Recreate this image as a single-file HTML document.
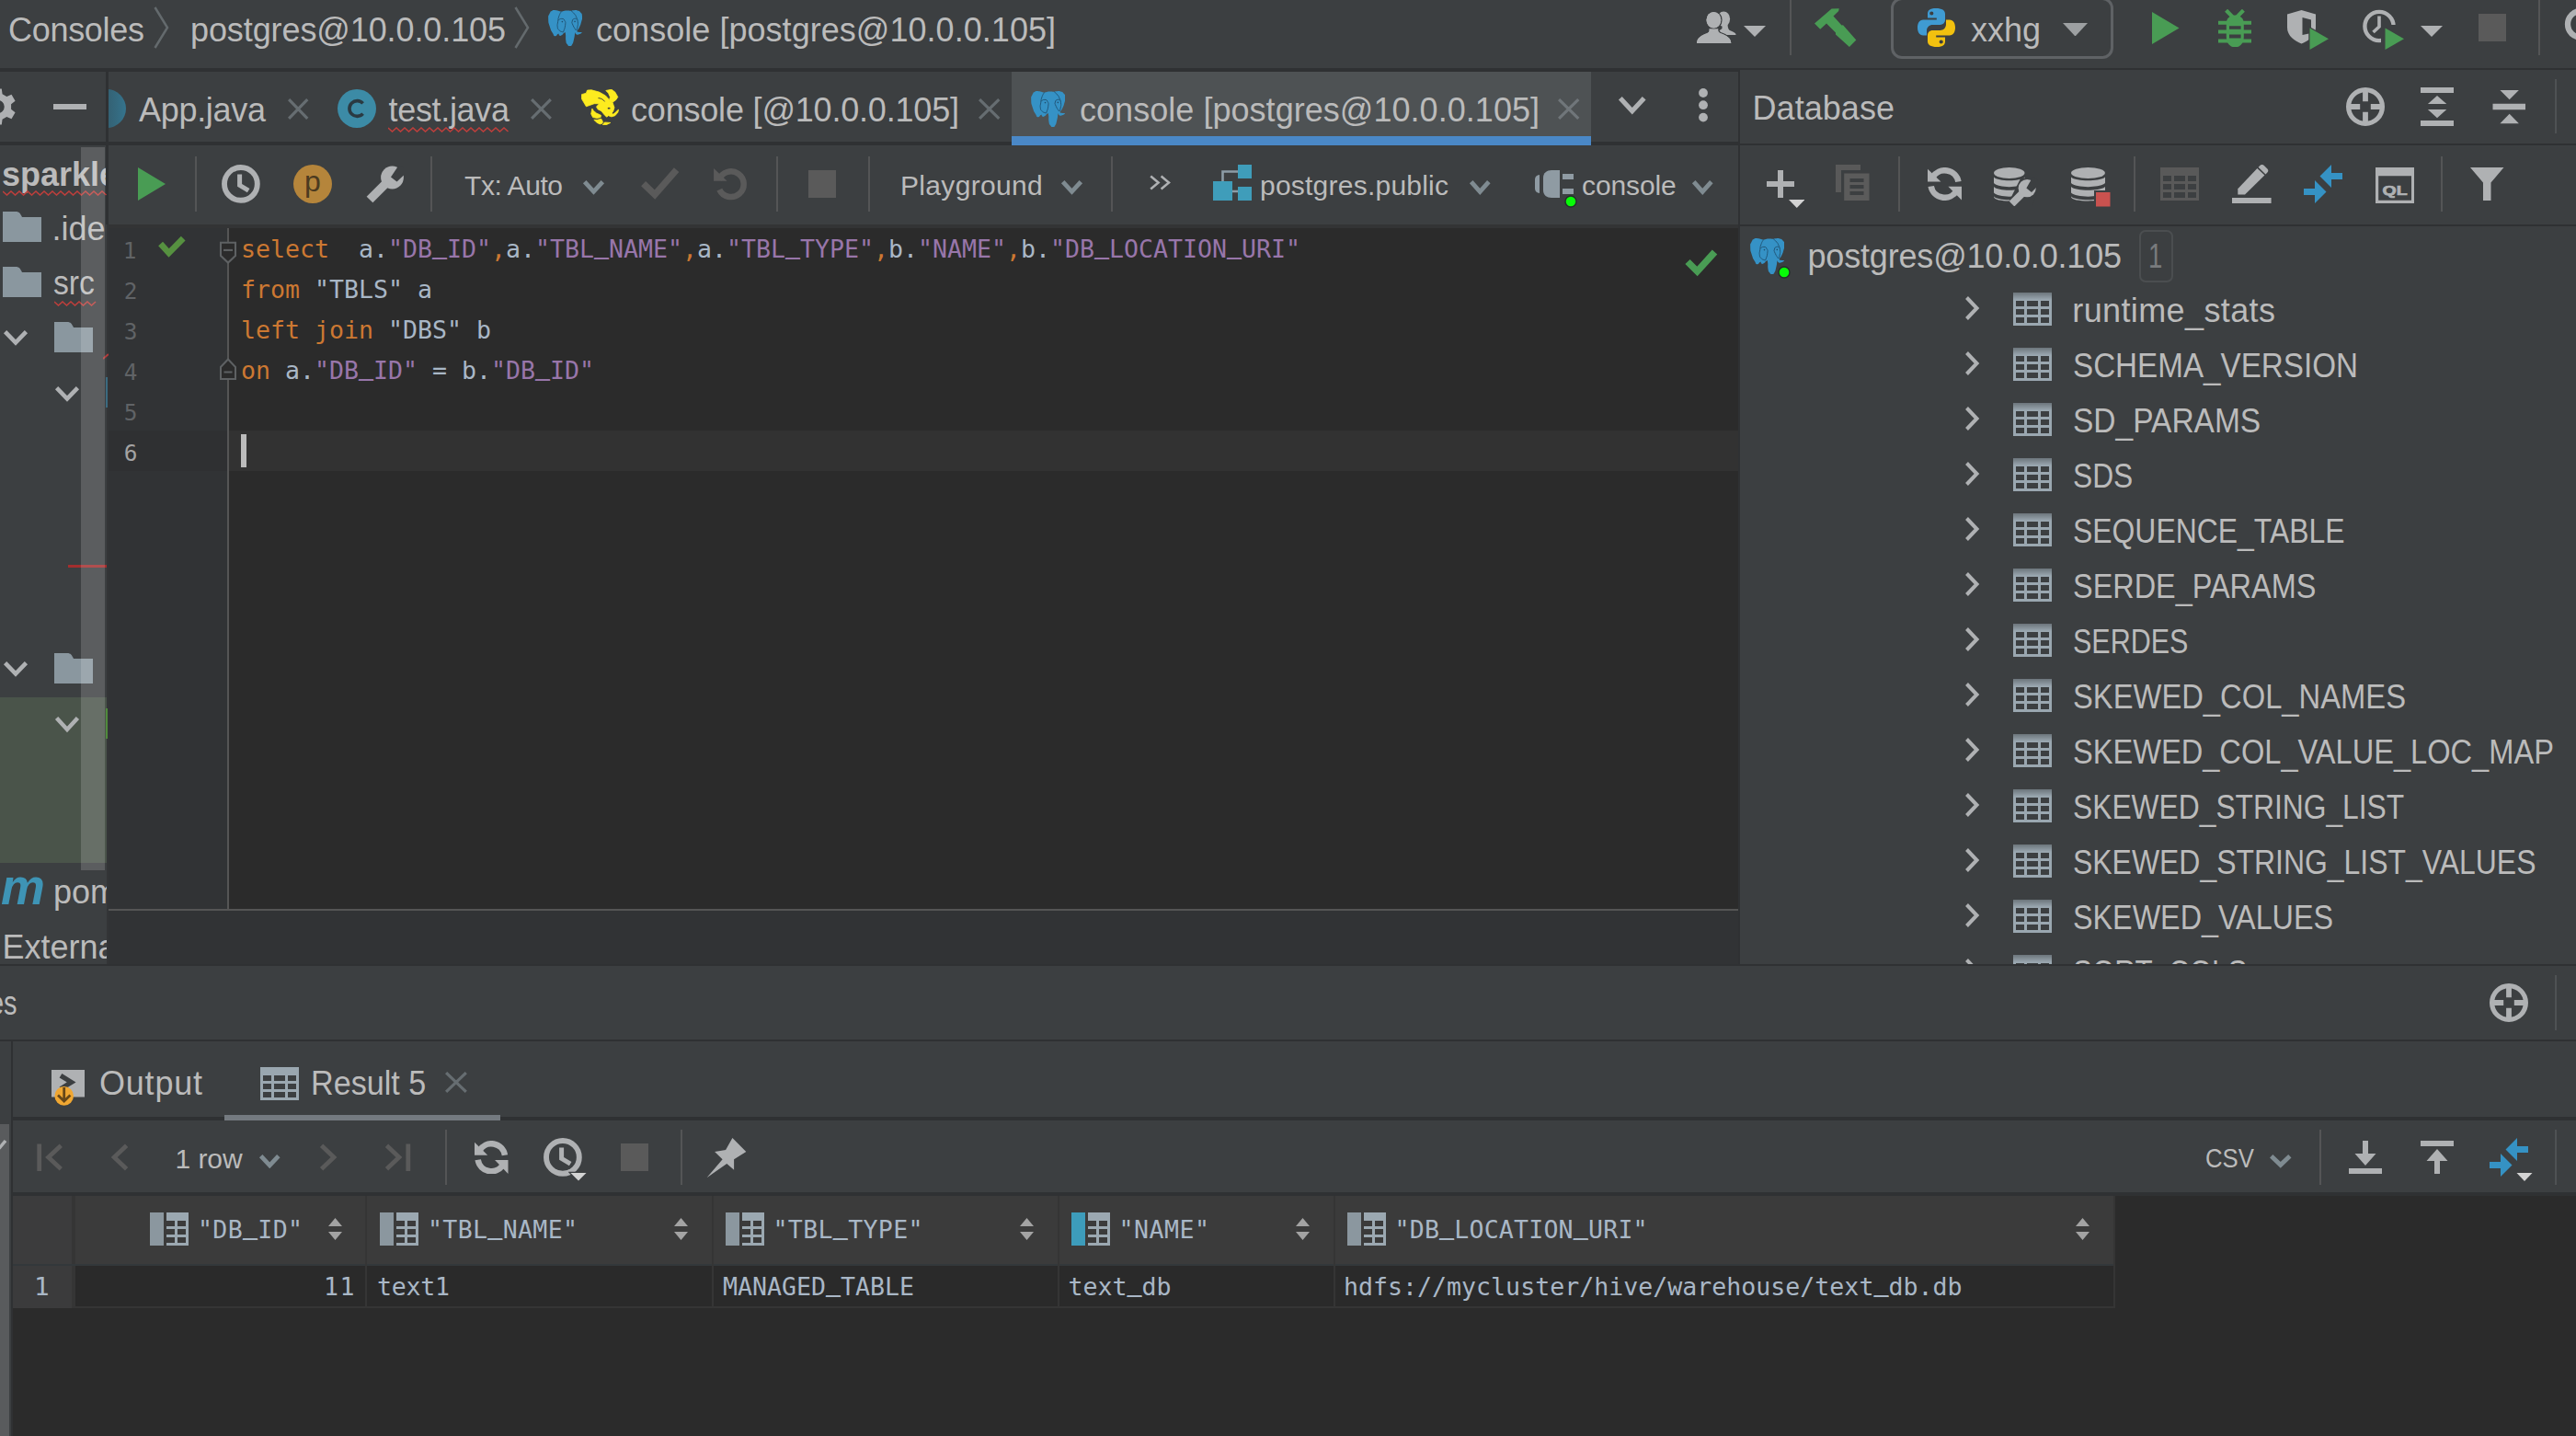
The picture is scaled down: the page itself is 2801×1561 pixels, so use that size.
<!DOCTYPE html>
<html lang="en"><head><meta charset="utf-8"><title>console [postgres@10.0.0.105]</title>
<style>

html,body{margin:0;padding:0}
body{width:2801px;height:1561px;overflow:hidden;position:relative;background:#3c3f41;font-family:"Liberation Sans",sans-serif;}
div,span,svg,section,header,nav,aside,main{position:absolute;box-sizing:border-box}
.sec{left:0;top:0;width:0;height:0}
.t{white-space:pre;font-family:"Liberation Sans",sans-serif}
.m{font-family:"DejaVu Sans Mono","Liberation Mono",monospace}
.v{position:relative;top:2px}
.u{position:relative;top:-4px;text-shadow:0 -1px 0 currentColor,0 -0.5px 0 currentColor}

</style></head>
<body>
<svg width="0" height="0" style="left:0;top:0" aria-hidden="true"><defs><linearGradient id="tblgrad" x1="0" y1="0" x2="0" y2="1"><stop offset="0" stop-color="#000" stop-opacity="0.3"/><stop offset="1" stop-color="#000" stop-opacity="0"/></linearGradient></defs></svg>
<!-- navigation bar -->
<nav class="sec" id="navigation-bar">
<div style="left:0px;top:0px;width:2801px;height:74px;background:#3c3f41;"></div>
<div style="left:0px;top:74px;width:2801px;height:2px;background:#2f3133;"></div>
<div style="left:0px;top:76px;width:1890px;height:2px;background:#2f3133;"></div>
<span class="t" style="left:9.00px;top:9.03px;font-size:36px;line-height:47px;color:#bbb;letter-spacing:-0.297px;">Consoles</span>
<span class="t" style="left:207.00px;top:9.03px;font-size:36px;line-height:47px;color:#bbb;letter-spacing:-0.098px;">postgres@10.0.0.105</span>
<span class="t" style="left:648.00px;top:9.03px;font-size:36px;line-height:47px;color:#bbb;letter-spacing:0.041px;">console [postgres@10.0.0.105]</span>
<span class="t" style="left:2143.00px;top:9.03px;font-size:36px;line-height:47px;color:#bbb;letter-spacing:-0.007px;">xxhg</span>
<svg style="left:167px;top:6px;" width="17" height="48" viewBox="0 0 17 48"><path d="M1.5 2 L15 24 L1.5 46" fill="none" stroke="#646a6d" stroke-width="2.5"/></svg>
<svg style="left:559px;top:6px;" width="17" height="48" viewBox="0 0 17 48"><path d="M1.5 2 L15 24 L1.5 46" fill="none" stroke="#646a6d" stroke-width="2.5"/></svg>
<svg style="left:596px;top:10.5px;" width="37" height="39.0" viewBox="0 0 37.3 39" preserveAspectRatio="none"><path fill="#3592c6" d="M4.60 0.40 C2.30 1.67 2.97 0.87 1.50 4.00 C0.03 7.13 0.07 5.07 0.20 9.80 C0.33 14.53 0.30 13.10 1.90 18.20 C3.50 23.30 3.07 21.73 5.00 25.10 C6.93 28.47 5.67 28.07 7.70 28.30 C9.73 28.53 9.57 26.03 11.10 25.80 C12.63 25.57 11.03 27.13 12.30 27.60 C13.57 28.07 13.00 28.23 14.90 27.20 C16.80 26.17 16.60 24.83 18.00 24.50 C19.40 24.17 18.60 23.20 19.10 26.20 C19.60 29.20 18.83 29.80 19.50 33.50 C20.17 37.20 19.70 35.47 21.10 37.30 C22.50 39.13 21.93 39.00 23.70 39.00 C25.47 39.00 24.87 39.77 26.40 37.30 C27.93 34.83 27.20 35.97 28.30 31.60 C29.40 27.23 29.00 26.07 29.70 24.20 C30.40 22.33 29.20 25.27 30.40 26.00 C31.60 26.73 31.13 26.90 33.30 26.40 C35.47 25.90 36.63 25.33 36.90 24.50 C37.17 23.67 35.80 24.47 34.10 23.90 C32.40 23.33 31.80 24.43 31.80 22.80 C31.80 21.17 32.57 22.33 34.10 19.00 C35.63 15.67 35.33 16.90 36.40 12.80 C37.47 8.70 37.57 10.13 37.30 6.70 C37.03 3.27 37.30 4.60 35.60 2.50 C33.90 0.40 34.87 1.13 32.20 0.40 C29.53 -0.33 29.90 0.17 27.60 0.30 C25.30 0.43 27.23 0.73 25.30 0.80 C23.37 0.87 24.23 0.53 21.80 0.50 C19.37 0.47 20.43 0.37 18.00 0.70 C15.57 1.03 16.53 1.43 14.50 1.50 C12.47 1.57 13.93 1.33 11.90 0.90 C9.87 0.47 10.83 0.37 8.40 0.20 C5.97 0.03 6.90 -0.87 4.60 0.40 Z"/><path fill="none" stroke="#1f4f6f" stroke-width="0.9" d="M14.50 1.50 C13.63 3.23 13.17 2.93 11.90 6.70 C10.63 10.47 11.23 8.97 10.70 12.80 C10.17 16.63 9.90 15.27 10.30 18.20 C10.70 21.13 10.37 19.83 11.90 21.60 C13.43 23.37 13.13 22.83 14.90 23.50 C16.67 24.17 16.43 23.57 17.20 23.60"/><path fill="none" stroke="#1f4f6f" stroke-width="0.9" d="M25.30 0.80 C26.43 1.87 26.80 1.67 28.70 4.00 C30.60 6.33 29.73 4.87 31.00 7.80 C32.27 10.73 32.10 9.33 32.50 12.80 C32.90 16.27 32.70 15.13 32.20 18.20 C31.70 21.27 31.40 20.73 31.00 22.00"/><path fill="none" stroke="#1f4f6f" stroke-width="0.9" d="M11.30 10.80 C12.50 10.33 12.67 9.23 14.90 9.40 C17.13 9.57 16.70 9.00 18.00 11.30 C19.30 13.60 19.20 12.27 18.80 16.30 C18.40 20.33 17.47 21.03 16.80 23.40"/><path fill="none" stroke="#1f4f6f" stroke-width="0.9" d="M31.60 10.10 C30.63 9.87 30.43 8.73 28.70 9.40 C26.97 10.07 26.90 9.80 26.40 12.10 C25.90 14.40 25.80 13.00 27.20 16.30 C28.60 19.60 29.47 20.10 30.60 22.00"/><circle cx="15.5" cy="12.6" r="0.8" fill="#1f4f6f"/><circle cx="29.3" cy="12.4" r="0.8" fill="#1f4f6f"/></svg>
<svg style="left:1845px;top:11.5px;" width="43" height="35.5" viewBox="0 0 43 35.5"><ellipse cx="29.2" cy="8.6" rx="6.9" ry="8.2" fill="#afb1b3"/><path fill="#afb1b3" d="M22 26 C22 22 26 20.5 27.5 19 L27.5 15 L33.6 15 C33.6 18.5 34.6 20.6 37 21.6 C40.2 22.8 42.6 24 42.6 26 Z"/><g stroke="#3c3f41" stroke-width="2.6" paint-order="stroke"><path fill="#afb1b3" d="M0 35.4 C0 29 5 26.4 11 24.2 C13.6 23.2 14 21.6 13.5 19.4 L23.3 19.4 C22.8 21.6 23.3 23.2 25.8 24.2 C32 26.4 37.3 29 37.3 35.4 Z"/><ellipse cx="18.4" cy="9.7" rx="7.9" ry="8.8" fill="#afb1b3"/></g><path fill="#afb1b3" d="M0 35.4 C0 29 5 26.4 11 24.2 C13.6 23.2 14 21.6 13.5 19.4 L23.3 19.4 C22.8 21.6 23.3 23.2 25.8 24.2 C32 26.4 37.3 29 37.3 35.4 Z"/><ellipse cx="18.4" cy="9.7" rx="7.9" ry="8.8" fill="#afb1b3"/></svg>
<svg style="left:1896px;top:28px;" width="24" height="12" viewBox="0 0 24 12"><path d="M0 0 H24 L12.0 12 Z" fill="#afb1b3"/></svg>
<svg style="left:1972.5px;top:9px;" width="46.0" height="43" viewBox="0 0 46.0 43"><path fill="#499c54" d="M0 16.5 L18.6 0.4 L26.7 0.2 L26.2 3 L20.5 8.5 L29.5 18.5 L31 18.2 L45.3 34.5 L37.9 42 L23 28.5 L23 26.5 L13 16.5 L6.2 22.8 Z"/></svg>
<div style="left:2056px;top:-3px;width:242px;height:67px;background:transparent;border:3.5px solid #5f6265;border-radius:12px"></div>
<svg style="left:2085px;top:9px;" width="41" height="42" viewBox="0 0 41 42"><path fill="#3f9bd2" fill-rule="evenodd" d="M20 0 C13 0 11 2.6 11 6 V10.5 H20.8 V12.6 H6.2 C2 12.6 0 16.4 0 21 C0 25.6 2 29.4 6.2 29.4 H10 V24.4 C10 20.6 13 18 16.4 18 H24.6 C27.6 18 30 15.8 30 12.6 V6 C30 2.2 26.6 0 20 0 Z M15.3 3.4 A2.1 2.1 0 1 1 15.3 7.6 A2.1 2.1 0 1 1 15.3 3.4 Z"/><g transform="rotate(180 20.5 21)"><path fill="#f2c10f" fill-rule="evenodd" d="M20 0 C13 0 11 2.6 11 6 V10.5 H20.8 V12.6 H6.2 C2 12.6 0 16.4 0 21 C0 25.6 2 29.4 6.2 29.4 H10 V24.4 C10 20.6 13 18 16.4 18 H24.6 C27.6 18 30 15.8 30 12.6 V6 C30 2.2 26.6 0 20 0 Z M15.3 3.4 A2.1 2.1 0 1 1 15.3 7.6 A2.1 2.1 0 1 1 15.3 3.4 Z"/></g></svg>
<svg style="left:2242.5px;top:24.5px;" width="27.0" height="14.5" viewBox="0 0 27.0 14.5"><path d="M0 0 H27.0 L13.5 14.5 Z" fill="#9da0a2"/></svg>
<svg style="left:2340px;top:12.5px;" width="29.5" height="35.0" viewBox="0 0 29.5 35.0"><path fill="#499c54" d="M0 0 L29.5 17.5 L0 35 Z"/></svg>
<svg style="left:2412px;top:9.5px;" width="36" height="41.5" viewBox="0 0 36 41.5"><path d="M8.6 1.2 L15.6 8.4 M27.4 1.2 L20.4 8.4" stroke="#499c54" stroke-width="4.2" fill="none"/><path fill="#499c54" d="M18.3 6.4 C24 6.4 27.8 10 27.8 15 V30 C27.8 37 23.6 41.4 18.3 41.4 C13 41.4 8.8 37 8.8 30 V15 C8.8 10 12.6 6.4 18.3 6.4 Z"/><path fill="#499c54" d="M0 12.8 H36 V16.8 H0Z M0 22.4 H36 V26.4 H0Z M0 32.4 H36 V36.4 H0Z"/><path fill="#3c3f41" d="M12 18.2 H24.6 V21.8 H12Z M12 27.6 H24.6 V31.4 H12Z"/></svg>
<svg style="left:2487px;top:11px;" width="45" height="43" viewBox="0 0 45 43"><path fill="#afb1b3" d="M0 4.5 L15.5 0 L31 4.5 V19 C31 28 23 33.5 15.5 36.5 C8 33.5 0 28 0 19 Z"/><path fill="#3c3f41" d="M16.5 8 L26 10.5 V25 L16.5 27 Z"/><path fill="#499c54" stroke="#3c3f41" stroke-width="2.5" paint-order="stroke" d="M24.5 19.5 L45 31.2 L24.5 43 Z"/></svg>
<svg style="left:2569px;top:10px;" width="45" height="44" viewBox="0 0 45 44"><circle cx="18" cy="18.5" r="15.6" fill="none" stroke="#afb1b3" stroke-width="4.4"/><path d="M18 7.5 V19 L11.5 25" fill="none" stroke="#afb1b3" stroke-width="3.6"/><path fill="#3c3f41" d="M20 17 H40 V40 H20Z"/><path fill="#499c54" d="M24.5 20.5 L45 32.2 L24.5 44 Z"/></svg>
<svg style="left:2632px;top:28px;" width="24" height="12" viewBox="0 0 24 12"><path d="M0 0 H24 L12.0 12 Z" fill="#afb1b3"/></svg>
<div style="left:2694.5px;top:15px;width:30.5px;height:30px;background:#5a5a5a;"></div>
<svg style="left:2780px;top:5px;" width="21" height="42" viewBox="0 0 21 42"><circle cx="26.4" cy="21.3" r="14.4" fill="none" stroke="#afb1b3" stroke-width="6.3"/></svg>
</nav>
<!-- editor tabs -->
<header class="sec" id="editor-tabs">
<div style="left:0px;top:78px;width:1890px;height:76px;background:#3c3f41;"></div>
<div style="left:1892px;top:76px;width:909px;height:80px;background:#3c3f41;"></div>
<div style="left:1100px;top:78px;width:630px;height:70px;background:#4e5254;"></div>
<div style="left:1100px;top:148px;width:630px;height:10px;background:#4a88c7;z-index:3"></div>
<div style="left:0px;top:154px;width:1890px;height:4px;background:#2f3133;"></div>
<div style="left:1890px;top:156px;width:911px;height:2px;background:#2f3133;"></div>
<div style="left:115px;top:78px;width:3px;height:166px;background:#2f3133;"></div>
<div style="left:116px;top:244px;width:2px;height:805px;background:#333537;"></div>
<div style="left:1890px;top:76px;width:2px;height:973px;background:#2f3133;"></div>
<span class="t" style="left:151.00px;top:96.03px;font-size:36px;line-height:47px;color:#bbb;letter-spacing:-0.297px;">App.java</span>
<span class="t" style="left:422.50px;top:96.03px;font-size:36px;line-height:47px;color:#bbb;letter-spacing:-0.318px;">test.java</span>
<span class="t" style="left:686.00px;top:96.03px;font-size:36px;line-height:47px;color:#bbb;letter-spacing:-0.189px;">console [@10.0.0.105]</span>
<span class="t" style="left:1174.00px;top:96.03px;font-size:36px;line-height:47px;color:#bbb;letter-spacing:0.041px;">console [postgres@10.0.0.105]</span>
<span class="t" style="left:1905.50px;top:94.03px;font-size:36px;line-height:47px;color:#bbb;letter-spacing:0.059px;">Database</span>
<svg style="left:0px;top:94px;" width="20" height="44" viewBox="0 0 20 44"><path fill="#afb1b3" fill-rule="evenodd" d="M2.55 8.21 L1.80 2.62 L-6.30 2.62 L-7.05 8.21 L-11.79 10.95 L-17.01 8.80 L-21.06 15.82 L-16.59 19.26 L-16.59 24.74 L-21.06 28.18 L-17.01 35.20 L-11.79 33.05 L-7.05 35.79 L-6.30 41.38 L1.80 41.38 L2.55 35.79 L7.29 33.05 L12.51 35.20 L16.56 28.18 L12.09 24.74 L12.09 19.26 L16.56 15.82 L12.51 8.80 L7.29 10.95 Z M4.75 22 A7 7 0 1 0 -9.25 22 A7 7 0 1 0 4.75 22 Z"/></svg>
<div style="left:58px;top:113px;width:36px;height:6px;background:#afb1b3;"></div>
<svg style="left:118px;top:96px;" width="22" height="44" viewBox="0 0 22 44"><defs><linearGradient id="fd" x1="0" x2="1"><stop offset="0" stop-color="#2f5f73" stop-opacity="0.55"/><stop offset="1" stop-color="#35748d"/></linearGradient></defs><circle cx="-2" cy="22" r="21" fill="url(#fd)"/></svg>
<svg style="left:367px;top:97px;" width="42" height="42" viewBox="0 0 42 42"><circle cx="21" cy="21" r="21" fill="#3c8ba6"/><path d="M27.6 15.4 A8.4 8.4 0 1 0 27.6 26.6" fill="none" stroke="#2a3a42" stroke-width="3.6"/></svg>
<svg style="left:313.3px;top:106.8px;" width="22.4" height="22.9" viewBox="0 0 22.4 22.9"><path d="M1.1 1.1 L21.299999999999976 21.79999999999999 M21.299999999999976 1.1 L1.1 21.79999999999999" stroke="#666d71" stroke-width="3.2" fill="none"/></svg>
<svg style="left:576.8px;top:106.8px;" width="22.9" height="22.9" viewBox="0 0 22.9 22.9"><path d="M1.1 1.1 L21.80000000000009 21.79999999999999 M21.80000000000009 1.1 L1.1 21.79999999999999" stroke="#666d71" stroke-width="3.2" fill="none"/></svg>
<svg style="left:1064.3px;top:106.8px;" width="23.4" height="22.9" viewBox="0 0 23.4 22.9"><path d="M1.1 1.1 L22.30000000000009 21.79999999999999 M22.30000000000009 1.1 L1.1 21.79999999999999" stroke="#666d71" stroke-width="3.2" fill="none"/></svg>
<svg style="left:1694.3px;top:106.8px;" width="23.4" height="22.9" viewBox="0 0 23.4 22.9"><path d="M1.1 1.1 L22.30000000000009 21.79999999999999 M22.30000000000009 1.1 L1.1 21.79999999999999" stroke="#70767a" stroke-width="3.2" fill="none"/></svg>
<svg style="left:422px;top:138px;" width="133" height="6" viewBox="0 0 133 6"><polyline points="0.0 1 4.5 5 9.0 1 13.5 5 18.0 1 22.5 5 27.0 1 31.5 5 36.0 1 40.5 5 45.0 1 49.5 5 54.0 1 58.5 5 63.0 1 67.5 5 72.0 1 76.5 5 81.0 1 85.5 5 90.0 1 94.5 5 99.0 1 103.5 5 108.0 1 112.5 5 117.0 1 121.5 5 126.0 1 130.5 5" fill="none" stroke="#bc3f3c" stroke-width="1.6"/></svg>
<svg style="left:632.3px;top:96.9px;" width="41.0" height="39.1" viewBox="0 0 41 39.1"><polygon fill="#fdeb1f" stroke="#fdeb1f" stroke-width="0.8" stroke-linejoin="round" points="0.4,5.7 5.4,4.2 6.5,1.1 11.1,0.8 19.5,3.1 26.4,6.9 29.5,10.3 30.6,13.0 34.1,14.5 36,19.9 34.8,23.7 33.3,26 34.8,26.8 38.3,23.7 40.6,22.2 39.8,25.3 36.8,28.7 32.9,29.9 29.5,28.7 27.9,30.2 26,28.7 21.8,23.7 18,21.8 16.5,19.1 19.5,15.7 14.2,15.7 5.4,18.8 0.4,10.3"/><polygon fill="#fdeb1f" stroke="#fdeb1f" stroke-width="0.8" stroke-linejoin="round" points="26.8,1.5 32.9,0.2 36.8,3.1 39.8,8.4 37.9,11.5 34.1,14.2 30.2,13 31.4,8.4 29.5,4.2"/><polygon fill="#fdeb1f" stroke="#fdeb1f" stroke-width="0.8" stroke-linejoin="round" points="11.9,21.1 10.7,26.8 12.6,30.6 17.2,31.4 21.1,30.6 21.4,28.3 16.5,26 13.4,23.4"/><polygon fill="#fdeb1f" stroke="#fdeb1f" stroke-width="0.8" stroke-linejoin="round" points="13.8,33.3 17.2,36.4 20.3,37.9 23,37.1 23.4,35.2 21.8,32.2 17.6,33.3"/><polygon fill="#fdeb1f" stroke="#fdeb1f" stroke-width="0.8" stroke-linejoin="round" points="23.4,38.7 27.2,38.7 31.8,36.4 25.3,36"/><ellipse cx="30.1" cy="20.7" rx="1.5" ry="0.9" fill="#3c3f41"/><path d="M18.5 9.6 C21.5 9.8 24 11 25.5 13.4" fill="none" stroke="#3c3f41" stroke-width="1"/><path d="M34.2 26.2 C36 25.4 37.4 24.2 38.4 22.8" fill="none" stroke="#3c3f41" stroke-width="1.1"/></svg>
<svg style="left:1121px;top:98.5px;" width="37.3" height="39.0" viewBox="0 0 37.3 39"><path fill="#3592c6" d="M4.60 0.40 C2.30 1.67 2.97 0.87 1.50 4.00 C0.03 7.13 0.07 5.07 0.20 9.80 C0.33 14.53 0.30 13.10 1.90 18.20 C3.50 23.30 3.07 21.73 5.00 25.10 C6.93 28.47 5.67 28.07 7.70 28.30 C9.73 28.53 9.57 26.03 11.10 25.80 C12.63 25.57 11.03 27.13 12.30 27.60 C13.57 28.07 13.00 28.23 14.90 27.20 C16.80 26.17 16.60 24.83 18.00 24.50 C19.40 24.17 18.60 23.20 19.10 26.20 C19.60 29.20 18.83 29.80 19.50 33.50 C20.17 37.20 19.70 35.47 21.10 37.30 C22.50 39.13 21.93 39.00 23.70 39.00 C25.47 39.00 24.87 39.77 26.40 37.30 C27.93 34.83 27.20 35.97 28.30 31.60 C29.40 27.23 29.00 26.07 29.70 24.20 C30.40 22.33 29.20 25.27 30.40 26.00 C31.60 26.73 31.13 26.90 33.30 26.40 C35.47 25.90 36.63 25.33 36.90 24.50 C37.17 23.67 35.80 24.47 34.10 23.90 C32.40 23.33 31.80 24.43 31.80 22.80 C31.80 21.17 32.57 22.33 34.10 19.00 C35.63 15.67 35.33 16.90 36.40 12.80 C37.47 8.70 37.57 10.13 37.30 6.70 C37.03 3.27 37.30 4.60 35.60 2.50 C33.90 0.40 34.87 1.13 32.20 0.40 C29.53 -0.33 29.90 0.17 27.60 0.30 C25.30 0.43 27.23 0.73 25.30 0.80 C23.37 0.87 24.23 0.53 21.80 0.50 C19.37 0.47 20.43 0.37 18.00 0.70 C15.57 1.03 16.53 1.43 14.50 1.50 C12.47 1.57 13.93 1.33 11.90 0.90 C9.87 0.47 10.83 0.37 8.40 0.20 C5.97 0.03 6.90 -0.87 4.60 0.40 Z"/><path fill="none" stroke="#1f4f6f" stroke-width="0.9" d="M14.50 1.50 C13.63 3.23 13.17 2.93 11.90 6.70 C10.63 10.47 11.23 8.97 10.70 12.80 C10.17 16.63 9.90 15.27 10.30 18.20 C10.70 21.13 10.37 19.83 11.90 21.60 C13.43 23.37 13.13 22.83 14.90 23.50 C16.67 24.17 16.43 23.57 17.20 23.60"/><path fill="none" stroke="#1f4f6f" stroke-width="0.9" d="M25.30 0.80 C26.43 1.87 26.80 1.67 28.70 4.00 C30.60 6.33 29.73 4.87 31.00 7.80 C32.27 10.73 32.10 9.33 32.50 12.80 C32.90 16.27 32.70 15.13 32.20 18.20 C31.70 21.27 31.40 20.73 31.00 22.00"/><path fill="none" stroke="#1f4f6f" stroke-width="0.9" d="M11.30 10.80 C12.50 10.33 12.67 9.23 14.90 9.40 C17.13 9.57 16.70 9.00 18.00 11.30 C19.30 13.60 19.20 12.27 18.80 16.30 C18.40 20.33 17.47 21.03 16.80 23.40"/><path fill="none" stroke="#1f4f6f" stroke-width="0.9" d="M31.60 10.10 C30.63 9.87 30.43 8.73 28.70 9.40 C26.97 10.07 26.90 9.80 26.40 12.10 C25.90 14.40 25.80 13.00 27.20 16.30 C28.60 19.60 29.47 20.10 30.60 22.00"/><circle cx="15.5" cy="12.6" r="0.8" fill="#1f4f6f"/><circle cx="29.3" cy="12.4" r="0.8" fill="#1f4f6f"/></svg>
<svg style="left:1757.5px;top:103px;" width="33.5" height="21.5" viewBox="0 0 33.5 21.5"><path d="M3.82 3.82 L16.75 17.68 L29.68 3.82" fill="none" stroke="#afb1b3" stroke-width="5.2"/></svg>
<svg style="left:1846px;top:95px;" width="12" height="39" viewBox="0 0 12 39"><circle cx="6" cy="6" r="4.9" fill="#afb1b3"/><circle cx="6" cy="19.2" r="4.9" fill="#afb1b3"/><circle cx="6" cy="32.6" r="4.9" fill="#afb1b3"/></svg>
<svg style="left:2551px;top:95px;" width="42" height="42" viewBox="0 0 42 42"><circle cx="21" cy="21" r="18.4" fill="none" stroke="#afb1b3" stroke-width="5.2"/><path d="M21 2V15.2 M21 26.8V40 M2 21H15.2 M26.8 21H40" stroke="#afb1b3" stroke-width="5.8" fill="none"/></svg>
<svg style="left:2632px;top:95px;" width="36" height="42" viewBox="0 0 36 42"><path fill="#afb1b3" d="M0 0 H36 V6 H0Z M0 36 H36 V42 H0Z M18 9 L28.3 17.9 H7.9Z M7.9 23.9 H28.3 L18 33.2Z"/></svg>
<svg style="left:2709.5px;top:98px;" width="36.5" height="36.5" viewBox="0 0 36.5 36.5"><path fill="#afb1b3" d="M8.4 0 H28.9 L18.65 10.2Z M0.5 14.8 H36.8 V21.2 H0.5Z M18.65 25.7 L28.9 36.2 H8.4Z"/></svg>
</header>
<!-- console toolbar -->
<div class="sec" id="console-toolbar">
<div style="left:0px;top:158px;width:2801px;height:86px;background:#3c3f41;"></div>
<div style="left:115px;top:158px;width:3px;height:86px;background:#2f3133;"></div>
<div style="left:1890px;top:158px;width:2px;height:88px;background:#2f3133;"></div>
<span class="t" style="left:505.00px;top:182.10px;font-size:30px;line-height:39px;color:#bbb;letter-spacing:-0.432px;">Tx: Auto</span>
<span class="t" style="left:979.00px;top:182.10px;font-size:30px;line-height:39px;color:#bbb;letter-spacing:0.324px;">Playground</span>
<span class="t" style="left:1370.00px;top:182.10px;font-size:30px;line-height:39px;color:#bbb;letter-spacing:0.230px;">postgres.public</span>
<span class="t" style="left:1720.00px;top:182.10px;font-size:30px;line-height:39px;color:#bbb;letter-spacing:-0.120px;">console</span>
<div style="left:212px;top:170px;width:2px;height:60px;background:#545556;"></div>
<div style="left:468px;top:170px;width:2px;height:60px;background:#545556;"></div>
<div style="left:844px;top:170px;width:2px;height:60px;background:#545556;"></div>
<div style="left:944px;top:170px;width:2px;height:60px;background:#545556;"></div>
<div style="left:1208px;top:170px;width:2px;height:60px;background:#545556;"></div>
<div style="left:2064px;top:170px;width:2px;height:60px;background:#545556;"></div>
<div style="left:2320px;top:170px;width:2px;height:60px;background:#545556;"></div>
<div style="left:2654px;top:170px;width:2px;height:60px;background:#545556;"></div>
<div style="left:2778px;top:86px;width:2px;height:59px;background:#4f5254;"></div>
<div style="left:1946px;top:0px;width:2px;height:60px;background:#545556;"></div>
<div style="left:2760px;top:0px;width:2px;height:60px;background:#545556;"></div>
<div style="left:1892px;top:244px;width:909px;height:2px;background:#2f3133;"></div>
<svg style="left:149.5px;top:182px;" width="30.0" height="36" viewBox="0 0 30.0 36"><path fill="#499c54" d="M0 0 L30 18 L0 36 Z"/></svg>
<svg style="left:240.5px;top:179px;" width="42.0" height="42" viewBox="0 0 42.0 42"><circle cx="20.9" cy="20.9" r="17.9" fill="none" stroke="#afb1b3" stroke-width="5.9"/><path d="M19.6 10.6 V22.4 L29.2 28.2" fill="none" stroke="#afb1b3" stroke-width="5"/></svg>
<svg style="left:319px;top:179px;" width="42" height="42" viewBox="0 0 42 42"><circle cx="21" cy="21" r="21" fill="#b5853b"/><text x="21" y="28.6" text-anchor="middle" font-family="Liberation Sans, sans-serif" font-size="32" fill="#4b3a20">p</text></svg>
<svg style="left:397.5px;top:179.5px;" width="41.5" height="41.0" viewBox="0 0 41.5 41.0"><path d="M4 37 L24 17" stroke="#afb1b3" stroke-width="9.5" fill="none"/><circle cx="28.5" cy="13" r="12.4" fill="#afb1b3"/><path fill="#3c3f41" d="M27 12.5 L36 -1 L46 6 L33.5 17.5 Z"/></svg>
<svg style="left:632px;top:193.5px;" width="27" height="18.0" viewBox="0 0 27 18.0"><path d="M3.6799999999999997 3.6799999999999997 L13.5 14.32 L23.32 3.6799999999999997" fill="none" stroke="#7f8b91" stroke-width="4.8"/></svg>
<svg style="left:696px;top:180px;" width="44" height="37" viewBox="0 0 44 37"><path d="M3.6 19.6 L16 31.6 L39.6 4.6" fill="none" stroke="#5a5a5a" stroke-width="7.2"/></svg>
<svg style="left:774px;top:180px;" width="40" height="40" viewBox="0 0 40 40"><path d="M7.84 15.46 A13.85 13.85 0 1 1 8.3 26.05" fill="none" stroke="#5a5a5a" stroke-width="6.5"/><path fill="#5a5a5a" d="M2.05 3.1 V16.75 H16.6 Z"/></svg>
<div style="left:879px;top:185px;width:30px;height:30px;background:#5a5a5a;"></div>
<svg style="left:1152px;top:193.5px;" width="27" height="18.0" viewBox="0 0 27 18.0"><path d="M3.6799999999999997 3.6799999999999997 L13.5 14.32 L23.32 3.6799999999999997" fill="none" stroke="#7f8b91" stroke-width="4.8"/></svg>
<svg style="left:1250px;top:190px;" width="24" height="17" viewBox="0 0 24 17"><path d="M1.2 1.5 L9.6 8.5 L1.2 15.5 M12.6 1.5 L21 8.5 L12.6 15.5" fill="none" stroke="#afb1b3" stroke-width="2.5"/></svg>
<svg style="left:1319px;top:179px;" width="42" height="39" viewBox="0 0 42 39"><path d="M10.5 19 V7.5 H28 M20 29 H28" fill="none" stroke="#8c9ca6" stroke-width="2.6"/><rect x="27" y="0" width="15" height="15" fill="#3f9dba"/><rect x="0" y="18" width="21" height="21" fill="#3f9dba"/><rect x="27" y="24" width="15" height="15" fill="#3f9dba"/></svg>
<svg style="left:1596px;top:193.5px;" width="26.5" height="18.0" viewBox="0 0 26.5 18.0"><path d="M3.6799999999999997 3.6799999999999997 L13.25 14.32 L22.82 3.6799999999999997" fill="none" stroke="#7f8b91" stroke-width="4.8"/></svg>
<svg style="left:1669px;top:185px;" width="42" height="30" viewBox="0 0 42 30"><path fill="#8f9ba3" d="M0 10 C0 7 2 5.5 5 5 V25 C2 24.5 0 23 0 20 Z"/><path fill="#8f9ba3" d="M9 8 C9 3 13 0 18 0 H27 V30 H18 C13 30 9 27 9 22 Z"/><rect x="30" y="4" width="12" height="6" fill="#8f9ba3"/><rect x="30" y="20" width="12" height="6" fill="#8f9ba3"/></svg>
<svg style="left:1700px;top:211px;" width="16" height="16" viewBox="0 0 16 16"><circle cx="8" cy="8" r="6" fill="#08fb08" stroke="#23302a" stroke-width="1.4"/></svg>
<svg style="left:1838px;top:193.5px;" width="26.5" height="18.0" viewBox="0 0 26.5 18.0"><path d="M3.6799999999999997 3.6799999999999997 L13.25 14.32 L22.82 3.6799999999999997" fill="none" stroke="#7f8b91" stroke-width="4.8"/></svg>
<svg style="left:1921px;top:185px;" width="30" height="30" viewBox="0 0 30 30"><path fill="#afb1b3" d="M12 0 H18 V12 H30 V18 H18 V30 H12 V18 H0 V12 H12Z"/></svg>
<svg style="left:1944.5px;top:217px;" width="17.5" height="9" viewBox="0 0 17.5 9"><path d="M0 0 H17.5 L8.75 9 Z" fill="#d3d3d3"/></svg>
<svg style="left:1996px;top:179px;" width="36.5" height="39" viewBox="0 0 36.5 39"><path fill="#595959" d="M0 0 H27 V6 H6 V30 H0Z"/><path fill="#5b5b5b" fill-rule="evenodd" d="M9.2 9.4 H36.5 V39 H9.2Z M15.5 15 V19 H30.5 V15Z M15.5 22 V26 H30.5 V22Z M15.5 29 V33 H30.5 V29Z"/></svg>
<svg style="left:2095.5px;top:182px;" width="37.0" height="36" viewBox="0 0 35.9 35.6" preserveAspectRatio="none"><path d="M5.36 10.5 A14.6 14.6 0 0 1 32.4 15.3" fill="none" stroke="#afb1b3" stroke-width="6.4"/><path d="M0 1.7 V15.4 H14 Z" fill="#afb1b3"/><path d="M30.64 25.1 A14.6 14.6 0 0 1 3.6 20.3" fill="none" stroke="#afb1b3" stroke-width="6.4"/><path d="M35.9 35 V20.5 H21.7 Z" fill="#afb1b3"/></svg>
<svg style="left:2167.5px;top:182px;" width="48.0" height="42" viewBox="0 0 48.0 42"><g transform="scale(0.905 1)"><ellipse cx="18.5" cy="6" rx="18.5" ry="6" fill="#afb1b3"/><path fill="#afb1b3" d="M0 10.5 C5 15.5 32 15.5 37 10.5 V17 C32 22.5 5 22.5 0 17 Z"/><path fill="#afb1b3" d="M0 21 C5 26 32 26 37 21 V27.5 C32 33 5 33 0 27.5 Z"/><path fill="#afb1b3" d="M0 31.5 C5 36.5 32 36.5 37 31.5 V32 C37 38 0 38 0 32 Z"/></g><path fill="#3c3f41" d="M14 42 L30 10 L50 20 L40 46 Z"/><path d="M19.5 39.6 L33.5 25.6" stroke="#afb1b3" stroke-width="8" fill="none"/><circle cx="36.2" cy="22.6" r="9.6" fill="#afb1b3"/><path fill="#3c3f41" d="M35.4 22.4 L42.5 10 L51 17 L41 27 Z"/></svg>
<svg style="left:2252px;top:182px;" width="42.5" height="42.5" viewBox="0 0 42.5 42.5"><g><ellipse cx="18.5" cy="6" rx="18.5" ry="6" fill="#afb1b3"/><path fill="#afb1b3" d="M0 10.5 C5 15.5 32 15.5 37 10.5 V17 C32 22.5 5 22.5 0 17 Z"/><path fill="#afb1b3" d="M0 21 C5 26 32 26 37 21 V27.5 C32 33 5 33 0 27.5 Z"/><path fill="#afb1b3" d="M0 31.5 C5 36.5 32 36.5 37 31.5 V32 C37 38 0 38 0 32 Z"/></g><rect x="25" y="25" width="19" height="19" fill="#3c3f41"/><rect x="27" y="27" width="15.5" height="15.5" fill="#c9524f"/></svg>
<svg style="left:2349px;top:182px;" width="42" height="36" viewBox="0 0 42 36"><path fill="#595959" fill-rule="evenodd" d="M0 0H42V36H0Z M3 9V15H12V9Z M15 9V15H27V9Z M30 9V15H39V9Z M3 18V24H12V18Z M15 18V24H27V18Z M30 18V24H39V18Z M3 27V33H12V27Z M15 27V33H27V27Z M30 27V33H39V27Z"/></svg>
<svg style="left:2426.5px;top:179px;" width="43.0" height="42" viewBox="0 0 43.0 42"><path fill="#afb1b3" d="M0 35.9 H42.6 V41.9 H0Z"/><path fill="#afb1b3" d="M6.3 26.2 V32.5 H14 L35.4 11.6 L27.4 3.9 Z"/><path fill="#afb1b3" d="M28.6 2.7 L30.6 0.8 C31.8 -0.3 33.4 -0.3 34.6 0.8 L38.4 4.5 C39.6 5.7 39.6 7.3 38.4 8.5 L36.5 10.4 Z"/></svg>
<svg style="left:2504.5px;top:179px;" width="42.0" height="42" viewBox="0 0 42.0 42"><path fill="#3592c4" d="M17.5 12.5 L30 0 V9 H42 V16 H30 V25 Z"/><path fill="#3592c4" d="M24.5 29.5 L12 42 V33 H0 V26 H12 V17 Z"/></svg>
<svg style="left:2583px;top:182px;" width="42" height="39" viewBox="0 0 42 39"><path fill="#afb1b3" fill-rule="evenodd" d="M0 0 H42 V39 H0Z M3.2 9.3 V35.8 H39 V9.3Z"/><text x="7.6" y="30.2" textLength="27" lengthAdjust="spacingAndGlyphs" font-family="Liberation Sans, sans-serif" font-weight="700" font-size="14.2" fill="#afb1b3" stroke="#afb1b3" stroke-width="0.7">QL</text></svg>
<svg style="left:2686px;top:182px;" width="36.5" height="36" viewBox="0 0 36.5 36"><path fill="#afb1b3" d="M0 0 H36.5 L22.5 16.5 V36 H14 V16.5 Z"/></svg>
</div>
<!-- project tool window (clipped) -->
<aside class="sec" id="project-tool-window">
<div style="left:0px;top:758px;width:116px;height:180px;background:#4a544a;"></div>
<span class="t" style="left:2.00px;top:166.03px;font-size:36px;line-height:47px;color:#bbb;font-weight:bold;width:113.00px;overflow:hidden;">sparkle</span>
<span class="t" style="left:56.50px;top:225.03px;font-size:36px;line-height:47px;color:#bbb;width:58.50px;overflow:hidden;">.idea</span>
<span class="t" style="left:58.06px;top:284.03px;font-size:36px;line-height:47px;color:#bbb;transform:scaleX(0.9364);transform-origin:0 0;">src</span>
<span class="t" style="left:58.00px;top:946.03px;font-size:36px;line-height:47px;color:#bbb;width:58.00px;overflow:hidden;">pom.xml</span>
<span class="t" style="left:2.50px;top:1006.03px;font-size:36px;line-height:47px;color:#bbb;width:113.50px;overflow:hidden;">External Libraries</span>
<span class="t" style="left:1.00px;top:927.94px;font-size:55px;line-height:72px;color:#3e94b5;transform:scaleX(0.9787);transform-origin:0 0;font-weight:bold;font-style:italic;">m</span>
<div style="left:74px;top:614px;width:42px;height:3px;background:#a32e2e;"></div>
<div style="left:115px;top:410px;width:2px;height:33px;background:#3b6a80;"></div>
<div style="left:115px;top:770px;width:2px;height:33px;background:#4f8a3c;"></div>
<div style="left:88px;top:160px;width:26px;height:786px;background:rgba(255,255,255,0.16);z-index:4"></div>
<svg style="left:3px;top:230px;" width="42" height="33" viewBox="0 0 42 33"><path fill="#8a979f" d="M0 0 H14 C18 0 19 2 21 6 H42 V33 H0 Z"/></svg>
<svg style="left:3px;top:290px;" width="42" height="33" viewBox="0 0 42 33"><path fill="#8a979f" d="M0 0 H14 C18 0 19 2 21 6 H42 V33 H0 Z"/></svg>
<svg style="left:59px;top:350px;" width="42" height="33" viewBox="0 0 42 33"><path fill="#8a979f" d="M0 0 H14 C18 0 19 2 21 6 H42 V33 H0 Z"/></svg>
<svg style="left:59px;top:710px;" width="42" height="33" viewBox="0 0 42 33"><path fill="#8a979f" d="M0 0 H14 C18 0 19 2 21 6 H42 V33 H0 Z"/></svg>
<svg style="left:2px;top:357px;" width="30" height="19" viewBox="0 0 30 19"><path d="M3.575 3.575 L15.0 15.425 L26.425 3.575" fill="none" stroke="#afb1b3" stroke-width="4.5"/></svg>
<svg style="left:57.5px;top:417.5px;" width="30.0" height="19.0" viewBox="0 0 30.0 19.0"><path d="M3.575 3.575 L15.0 15.425 L26.425 3.575" fill="none" stroke="#afb1b3" stroke-width="4.5"/></svg>
<svg style="left:2px;top:717px;" width="30" height="19" viewBox="0 0 30 19"><path d="M3.575 3.575 L15.0 15.425 L26.425 3.575" fill="none" stroke="#afb1b3" stroke-width="4.5"/></svg>
<svg style="left:57.5px;top:777px;" width="30.0" height="19.5" viewBox="0 0 30.0 19.5"><path d="M3.575 3.575 L15.0 15.925 L26.425 3.575" fill="none" stroke="#afb1b3" stroke-width="4.5"/></svg>
<svg style="left:3px;top:207px;" width="114" height="6" viewBox="0 0 114 6"><polyline points="0.0 1 4.5 5 9.0 1 13.5 5 18.0 1 22.5 5 27.0 1 31.5 5 36.0 1 40.5 5 45.0 1 49.5 5 54.0 1 58.5 5 63.0 1 67.5 5 72.0 1 76.5 5 81.0 1 85.5 5 90.0 1 94.5 5 99.0 1 103.5 5 108.0 1 112.5 5" fill="none" stroke="#bc3f3c" stroke-width="1.6"/></svg>
<svg style="left:59px;top:326.5px;" width="46" height="6.0" viewBox="0 0 46 6.0"><polyline points="0.0 1 4.5 5 9.0 1 13.5 5 18.0 1 22.5 5 27.0 1 31.5 5 36.0 1 40.5 5 45.0 1" fill="none" stroke="#bc3f3c" stroke-width="1.6"/></svg>
<svg style="left:112px;top:384px;" width="6" height="7" viewBox="0 0 6 7"><path d="M0 6 L6 1" stroke="#b03a3a" stroke-width="2"/></svg>
</aside>
<!-- SQL editor -->
<main class="sec" id="sql-editor">
<div style="left:118px;top:244px;width:131px;height:745px;background:#313335;"></div>
<div style="left:247px;top:248px;width:2px;height:740px;background:#555555;"></div>
<div style="left:249px;top:244px;width:1641px;height:745px;background:#2b2b2b;"></div>
<div style="left:118px;top:244px;width:1772px;height:4px;background:#333435;"></div>
<div style="left:118px;top:468px;width:129px;height:44px;background:#2f3032;"></div>
<div style="left:249px;top:468px;width:1641px;height:44px;background:#323232;"></div>
<div style="left:118px;top:988px;width:1772px;height:2px;background:#555555;"></div>
<div style="left:118px;top:990px;width:1772px;height:59px;background:#313335;"></div>
<div style="left:262px;top:472px;width:6px;height:36px;background:#bbbbbb;"></div>
<span class="t m" style="left:262.00px;top:253.29px;font-size:26.6px;line-height:35px;color:#cc7832;letter-spacing:-0.015px;">select</span>
<span class="t m" style="left:390.00px;top:253.29px;font-size:26.6px;line-height:35px;color:#a9b7c6;letter-spacing:-0.015px;">a.</span>
<span class="t m" style="left:422.00px;top:253.29px;font-size:26.6px;line-height:35px;color:#9876aa;letter-spacing:-0.015px;">"DB<span class="u">_</span>ID"</span>
<span class="t m" style="left:534.00px;top:253.29px;font-size:26.6px;line-height:35px;color:#cc7832;letter-spacing:-0.015px;">,</span>
<span class="t m" style="left:550.00px;top:253.29px;font-size:26.6px;line-height:35px;color:#a9b7c6;letter-spacing:-0.015px;">a.</span>
<span class="t m" style="left:582.00px;top:253.29px;font-size:26.6px;line-height:35px;color:#9876aa;letter-spacing:-0.015px;">"TBL<span class="u">_</span>NAME"</span>
<span class="t m" style="left:742.00px;top:253.29px;font-size:26.6px;line-height:35px;color:#cc7832;letter-spacing:-0.015px;">,</span>
<span class="t m" style="left:758.00px;top:253.29px;font-size:26.6px;line-height:35px;color:#a9b7c6;letter-spacing:-0.015px;">a.</span>
<span class="t m" style="left:790.00px;top:253.29px;font-size:26.6px;line-height:35px;color:#9876aa;letter-spacing:-0.015px;">"TBL<span class="u">_</span>TYPE"</span>
<span class="t m" style="left:950.00px;top:253.29px;font-size:26.6px;line-height:35px;color:#cc7832;letter-spacing:-0.015px;">,</span>
<span class="t m" style="left:966.00px;top:253.29px;font-size:26.6px;line-height:35px;color:#a9b7c6;letter-spacing:-0.015px;">b.</span>
<span class="t m" style="left:998.00px;top:253.29px;font-size:26.6px;line-height:35px;color:#9876aa;letter-spacing:-0.015px;">"NAME"</span>
<span class="t m" style="left:1094.00px;top:253.29px;font-size:26.6px;line-height:35px;color:#cc7832;letter-spacing:-0.015px;">,</span>
<span class="t m" style="left:1110.00px;top:253.29px;font-size:26.6px;line-height:35px;color:#a9b7c6;letter-spacing:-0.015px;">b.</span>
<span class="t m" style="left:1142.00px;top:253.29px;font-size:26.6px;line-height:35px;color:#9876aa;letter-spacing:-0.015px;">"DB<span class="u">_</span>LOCATION<span class="u">_</span>URI"</span>
<span class="t m" style="left:262.00px;top:297.29px;font-size:26.6px;line-height:35px;color:#cc7832;letter-spacing:-0.015px;">from</span>
<span class="t m" style="left:342.00px;top:297.29px;font-size:26.6px;line-height:35px;color:#a9b7c6;letter-spacing:-0.015px;">"TBLS" a</span>
<span class="t m" style="left:262.00px;top:341.29px;font-size:26.6px;line-height:35px;color:#cc7832;letter-spacing:-0.015px;">left join</span>
<span class="t m" style="left:422.00px;top:341.29px;font-size:26.6px;line-height:35px;color:#a9b7c6;letter-spacing:-0.015px;">"DBS" b</span>
<span class="t m" style="left:262.00px;top:385.29px;font-size:26.6px;line-height:35px;color:#cc7832;letter-spacing:-0.015px;">on</span>
<span class="t m" style="left:310.00px;top:385.29px;font-size:26.6px;line-height:35px;color:#a9b7c6;letter-spacing:-0.015px;">a.</span>
<span class="t m" style="left:342.00px;top:385.29px;font-size:26.6px;line-height:35px;color:#9876aa;letter-spacing:-0.015px;">"DB<span class="u">_</span>ID"</span>
<span class="t m" style="left:470.00px;top:385.29px;font-size:26.6px;line-height:35px;color:#a9b7c6;letter-spacing:-0.015px;">= b.</span>
<span class="t m" style="left:534.00px;top:385.29px;font-size:26.6px;line-height:35px;color:#9876aa;letter-spacing:-0.015px;">"DB<span class="u">_</span>ID"</span>
<span class="t m" style="left:133.70px;top:256.55px;font-size:24.4px;line-height:32px;color:#606366;">1</span>
<span class="t m" style="left:134.70px;top:300.55px;font-size:24.4px;line-height:32px;color:#606366;">2</span>
<span class="t m" style="left:134.70px;top:344.55px;font-size:24.4px;line-height:32px;color:#606366;">3</span>
<span class="t m" style="left:134.70px;top:388.55px;font-size:24.4px;line-height:32px;color:#606366;">4</span>
<span class="t m" style="left:134.70px;top:432.55px;font-size:24.4px;line-height:32px;color:#606366;">5</span>
<span class="t m" style="left:134.70px;top:476.55px;font-size:24.4px;line-height:32px;color:#a4a3a3;">6</span>
<svg style="left:170px;top:255px;" width="34" height="28" viewBox="0 0 34 28"><path d="M4.6 10 L13.6 20 L29.2 4.1" fill="none" stroke="#569140" stroke-width="6.6"/></svg>
<svg style="left:238px;top:261px;" width="20" height="27" viewBox="0 0 20 27"><path d="M2 2.8 H18 V17 L10 24.6 L2 17 Z" fill="#2b2b2b" stroke="#5e6163" stroke-width="2.1"/><path d="M5 10.9 H15" stroke="#5e6163" stroke-width="2.1"/></svg>
<svg style="left:238px;top:389px;" width="20" height="25" viewBox="0 0 20 25"><path d="M2 23 H18 V10 L10 1.5 L2 10 Z" fill="#2b2b2b" stroke="#5e6163" stroke-width="2"/><path d="M5.5 15.5 H14.5" stroke="#5e6163" stroke-width="2"/></svg>
<svg style="left:1830px;top:268px;" width="40" height="33" viewBox="0 0 40 33"><path d="M5 16.5 L15.5 27 L34.5 6" fill="none" stroke="#499c54" stroke-width="7.4"/></svg>
</main>
<!-- database tool window -->
<aside class="sec" id="database-tool-window">
<span class="t" style="left:1965.50px;top:255.03px;font-size:36px;line-height:47px;color:#bbb;letter-spacing:-0.181px;">postgres@10.0.0.105</span>
<div style="left:2326px;top:250px;width:37px;height:57px;background:transparent;border:2px solid #4b4e50;border-radius:7px"></div>
<span class="t" style="left:2336.47px;top:255.03px;font-size:36px;line-height:47px;color:#787b7d;transform:scaleX(0.7647);transform-origin:0 0;">1</span>
<div style="left:1892px;top:246px;width:909px;height:802px;overflow:hidden">
<span class="t" style="left:361.30px;top:68.03px;font-size:36px;line-height:47px;color:#bbb;letter-spacing:0.384px;">runtime<span class="v">_</span>stats</span>
<svg style="left:244.4px;top:74.8px;" width="17.0" height="28.0" viewBox="0 0 17.0 28.0"><path d="M2.5 2.5 L13.5 14 L2.5 25.5" fill="none" stroke="#afb1b3" stroke-width="4"/></svg>
<svg style="left:297px;top:72px;" width="42" height="36" viewBox="0 0 42 36"><path fill="#9aa7b0" fill-rule="evenodd" d="M0 0H42V36H0Z M3 9V15H12V9Z M15 9V15H27V9Z M30 9V15H39V9Z M3 18V24H12V18Z M15 18V24H27V18Z M30 18V24H39V18Z M3 27V33H12V27Z M15 27V33H27V27Z M30 27V33H39V27Z"/><rect x="0" y="0" width="42" height="8" fill="url(#tblgrad)"/></svg>
<span class="t" style="left:362.38px;top:128.03px;font-size:36px;line-height:47px;color:#bbb;transform:scaleX(0.9223);transform-origin:0 0;">SCHEMA<span class="v">_</span>VERSION</span>
<svg style="left:244.4px;top:134.8px;" width="17.0" height="28.0" viewBox="0 0 17.0 28.0"><path d="M2.5 2.5 L13.5 14 L2.5 25.5" fill="none" stroke="#afb1b3" stroke-width="4"/></svg>
<svg style="left:297px;top:132px;" width="42" height="36" viewBox="0 0 42 36"><path fill="#9aa7b0" fill-rule="evenodd" d="M0 0H42V36H0Z M3 9V15H12V9Z M15 9V15H27V9Z M30 9V15H39V9Z M3 18V24H12V18Z M15 18V24H27V18Z M30 18V24H39V18Z M3 27V33H12V27Z M15 27V33H27V27Z M30 27V33H39V27Z"/><rect x="0" y="0" width="42" height="8" fill="url(#tblgrad)"/></svg>
<span class="t" style="left:362.37px;top:188.03px;font-size:36px;line-height:47px;color:#bbb;transform:scaleX(0.9306);transform-origin:0 0;">SD<span class="v">_</span>PARAMS</span>
<svg style="left:244.4px;top:194.8px;" width="17.0" height="28.0" viewBox="0 0 17.0 28.0"><path d="M2.5 2.5 L13.5 14 L2.5 25.5" fill="none" stroke="#afb1b3" stroke-width="4"/></svg>
<svg style="left:297px;top:192px;" width="42" height="36" viewBox="0 0 42 36"><path fill="#9aa7b0" fill-rule="evenodd" d="M0 0H42V36H0Z M3 9V15H12V9Z M15 9V15H27V9Z M30 9V15H39V9Z M3 18V24H12V18Z M15 18V24H27V18Z M30 18V24H39V18Z M3 27V33H12V27Z M15 27V33H27V27Z M30 27V33H39V27Z"/><rect x="0" y="0" width="42" height="8" fill="url(#tblgrad)"/></svg>
<span class="t" style="left:362.42px;top:248.03px;font-size:36px;line-height:47px;color:#bbb;transform:scaleX(0.8818);transform-origin:0 0;">SDS</span>
<svg style="left:244.4px;top:254.8px;" width="17.0" height="28.0" viewBox="0 0 17.0 28.0"><path d="M2.5 2.5 L13.5 14 L2.5 25.5" fill="none" stroke="#afb1b3" stroke-width="4"/></svg>
<svg style="left:297px;top:252px;" width="42" height="36" viewBox="0 0 42 36"><path fill="#9aa7b0" fill-rule="evenodd" d="M0 0H42V36H0Z M3 9V15H12V9Z M15 9V15H27V9Z M30 9V15H39V9Z M3 18V24H12V18Z M15 18V24H27V18Z M30 18V24H39V18Z M3 27V33H12V27Z M15 27V33H27V27Z M30 27V33H39V27Z"/><rect x="0" y="0" width="42" height="8" fill="url(#tblgrad)"/></svg>
<span class="t" style="left:362.41px;top:308.03px;font-size:36px;line-height:47px;color:#bbb;transform:scaleX(0.8862);transform-origin:0 0;">SEQUENCE<span class="v">_</span>TABLE</span>
<svg style="left:244.4px;top:314.8px;" width="17.0" height="28.0" viewBox="0 0 17.0 28.0"><path d="M2.5 2.5 L13.5 14 L2.5 25.5" fill="none" stroke="#afb1b3" stroke-width="4"/></svg>
<svg style="left:297px;top:312px;" width="42" height="36" viewBox="0 0 42 36"><path fill="#9aa7b0" fill-rule="evenodd" d="M0 0H42V36H0Z M3 9V15H12V9Z M15 9V15H27V9Z M30 9V15H39V9Z M3 18V24H12V18Z M15 18V24H27V18Z M30 18V24H39V18Z M3 27V33H12V27Z M15 27V33H27V27Z M30 27V33H39V27Z"/><rect x="0" y="0" width="42" height="8" fill="url(#tblgrad)"/></svg>
<span class="t" style="left:362.40px;top:368.03px;font-size:36px;line-height:47px;color:#bbb;transform:scaleX(0.9008);transform-origin:0 0;">SERDE<span class="v">_</span>PARAMS</span>
<svg style="left:244.4px;top:374.8px;" width="17.0" height="28.0" viewBox="0 0 17.0 28.0"><path d="M2.5 2.5 L13.5 14 L2.5 25.5" fill="none" stroke="#afb1b3" stroke-width="4"/></svg>
<svg style="left:297px;top:372px;" width="42" height="36" viewBox="0 0 42 36"><path fill="#9aa7b0" fill-rule="evenodd" d="M0 0H42V36H0Z M3 9V15H12V9Z M15 9V15H27V9Z M30 9V15H39V9Z M3 18V24H12V18Z M15 18V24H27V18Z M30 18V24H39V18Z M3 27V33H12V27Z M15 27V33H27V27Z M30 27V33H39V27Z"/><rect x="0" y="0" width="42" height="8" fill="url(#tblgrad)"/></svg>
<span class="t" style="left:362.45px;top:428.03px;font-size:36px;line-height:47px;color:#bbb;transform:scaleX(0.8471);transform-origin:0 0;">SERDES</span>
<svg style="left:244.4px;top:434.8px;" width="17.0" height="28.0" viewBox="0 0 17.0 28.0"><path d="M2.5 2.5 L13.5 14 L2.5 25.5" fill="none" stroke="#afb1b3" stroke-width="4"/></svg>
<svg style="left:297px;top:432px;" width="42" height="36" viewBox="0 0 42 36"><path fill="#9aa7b0" fill-rule="evenodd" d="M0 0H42V36H0Z M3 9V15H12V9Z M15 9V15H27V9Z M30 9V15H39V9Z M3 18V24H12V18Z M15 18V24H27V18Z M30 18V24H39V18Z M3 27V33H12V27Z M15 27V33H27V27Z M30 27V33H39V27Z"/><rect x="0" y="0" width="42" height="8" fill="url(#tblgrad)"/></svg>
<span class="t" style="left:362.39px;top:488.03px;font-size:36px;line-height:47px;color:#bbb;transform:scaleX(0.9091);transform-origin:0 0;">SKEWED<span class="v">_</span>COL<span class="v">_</span>NAMES</span>
<svg style="left:244.4px;top:494.8px;" width="17.0" height="28.0" viewBox="0 0 17.0 28.0"><path d="M2.5 2.5 L13.5 14 L2.5 25.5" fill="none" stroke="#afb1b3" stroke-width="4"/></svg>
<svg style="left:297px;top:492px;" width="42" height="36" viewBox="0 0 42 36"><path fill="#9aa7b0" fill-rule="evenodd" d="M0 0H42V36H0Z M3 9V15H12V9Z M15 9V15H27V9Z M30 9V15H39V9Z M3 18V24H12V18Z M15 18V24H27V18Z M30 18V24H39V18Z M3 27V33H12V27Z M15 27V33H27V27Z M30 27V33H39V27Z"/><rect x="0" y="0" width="42" height="8" fill="url(#tblgrad)"/></svg>
<span class="t" style="left:362.39px;top:548.03px;font-size:36px;line-height:47px;color:#bbb;transform:scaleX(0.9052);transform-origin:0 0;">SKEWED<span class="v">_</span>COL<span class="v">_</span>VALUE<span class="v">_</span>LOC<span class="v">_</span>MAP</span>
<svg style="left:244.4px;top:554.8px;" width="17.0" height="28.0" viewBox="0 0 17.0 28.0"><path d="M2.5 2.5 L13.5 14 L2.5 25.5" fill="none" stroke="#afb1b3" stroke-width="4"/></svg>
<svg style="left:297px;top:552px;" width="42" height="36" viewBox="0 0 42 36"><path fill="#9aa7b0" fill-rule="evenodd" d="M0 0H42V36H0Z M3 9V15H12V9Z M15 9V15H27V9Z M30 9V15H39V9Z M3 18V24H12V18Z M15 18V24H27V18Z M30 18V24H39V18Z M3 27V33H12V27Z M15 27V33H27V27Z M30 27V33H39V27Z"/><rect x="0" y="0" width="42" height="8" fill="url(#tblgrad)"/></svg>
<span class="t" style="left:362.42px;top:608.03px;font-size:36px;line-height:47px;color:#bbb;transform:scaleX(0.8826);transform-origin:0 0;">SKEWED<span class="v">_</span>STRING<span class="v">_</span>LIST</span>
<svg style="left:244.4px;top:614.8px;" width="17.0" height="28.0" viewBox="0 0 17.0 28.0"><path d="M2.5 2.5 L13.5 14 L2.5 25.5" fill="none" stroke="#afb1b3" stroke-width="4"/></svg>
<svg style="left:297px;top:612px;" width="42" height="36" viewBox="0 0 42 36"><path fill="#9aa7b0" fill-rule="evenodd" d="M0 0H42V36H0Z M3 9V15H12V9Z M15 9V15H27V9Z M30 9V15H39V9Z M3 18V24H12V18Z M15 18V24H27V18Z M30 18V24H39V18Z M3 27V33H12V27Z M15 27V33H27V27Z M30 27V33H39V27Z"/><rect x="0" y="0" width="42" height="8" fill="url(#tblgrad)"/></svg>
<span class="t" style="left:362.41px;top:668.03px;font-size:36px;line-height:47px;color:#bbb;transform:scaleX(0.8870);transform-origin:0 0;">SKEWED<span class="v">_</span>STRING<span class="v">_</span>LIST<span class="v">_</span>VALUES</span>
<svg style="left:244.4px;top:674.8px;" width="17.0" height="28.0" viewBox="0 0 17.0 28.0"><path d="M2.5 2.5 L13.5 14 L2.5 25.5" fill="none" stroke="#afb1b3" stroke-width="4"/></svg>
<svg style="left:297px;top:672px;" width="42" height="36" viewBox="0 0 42 36"><path fill="#9aa7b0" fill-rule="evenodd" d="M0 0H42V36H0Z M3 9V15H12V9Z M15 9V15H27V9Z M30 9V15H39V9Z M3 18V24H12V18Z M15 18V24H27V18Z M30 18V24H39V18Z M3 27V33H12V27Z M15 27V33H27V27Z M30 27V33H39V27Z"/><rect x="0" y="0" width="42" height="8" fill="url(#tblgrad)"/></svg>
<span class="t" style="left:362.40px;top:728.03px;font-size:36px;line-height:47px;color:#bbb;transform:scaleX(0.8972);transform-origin:0 0;">SKEWED<span class="v">_</span>VALUES</span>
<svg style="left:244.4px;top:734.8px;" width="17.0" height="28.0" viewBox="0 0 17.0 28.0"><path d="M2.5 2.5 L13.5 14 L2.5 25.5" fill="none" stroke="#afb1b3" stroke-width="4"/></svg>
<svg style="left:297px;top:732px;" width="42" height="36" viewBox="0 0 42 36"><path fill="#9aa7b0" fill-rule="evenodd" d="M0 0H42V36H0Z M3 9V15H12V9Z M15 9V15H27V9Z M30 9V15H39V9Z M3 18V24H12V18Z M15 18V24H27V18Z M30 18V24H39V18Z M3 27V33H12V27Z M15 27V33H27V27Z M30 27V33H39V27Z"/><rect x="0" y="0" width="42" height="8" fill="url(#tblgrad)"/></svg>
<span class="t" style="left:362.43px;top:788.03px;font-size:36px;line-height:47px;color:#bbb;transform:scaleX(0.8714);transform-origin:0 0;">SORT<span class="v">_</span>COLS</span>
<svg style="left:244.4px;top:794.8px;" width="17.0" height="28.0" viewBox="0 0 17.0 28.0"><path d="M2.5 2.5 L13.5 14 L2.5 25.5" fill="none" stroke="#afb1b3" stroke-width="4"/></svg>
<svg style="left:297px;top:792px;" width="42" height="36" viewBox="0 0 42 36"><path fill="#9aa7b0" fill-rule="evenodd" d="M0 0H42V36H0Z M3 9V15H12V9Z M15 9V15H27V9Z M30 9V15H39V9Z M3 18V24H12V18Z M15 18V24H27V18Z M30 18V24H39V18Z M3 27V33H12V27Z M15 27V33H27V27Z M30 27V33H39V27Z"/><rect x="0" y="0" width="42" height="8" fill="url(#tblgrad)"/></svg>
</div>
<svg style="left:1903px;top:258.6px;" width="37.3" height="39.0" viewBox="0 0 37.3 39"><path fill="#3592c6" d="M4.60 0.40 C2.30 1.67 2.97 0.87 1.50 4.00 C0.03 7.13 0.07 5.07 0.20 9.80 C0.33 14.53 0.30 13.10 1.90 18.20 C3.50 23.30 3.07 21.73 5.00 25.10 C6.93 28.47 5.67 28.07 7.70 28.30 C9.73 28.53 9.57 26.03 11.10 25.80 C12.63 25.57 11.03 27.13 12.30 27.60 C13.57 28.07 13.00 28.23 14.90 27.20 C16.80 26.17 16.60 24.83 18.00 24.50 C19.40 24.17 18.60 23.20 19.10 26.20 C19.60 29.20 18.83 29.80 19.50 33.50 C20.17 37.20 19.70 35.47 21.10 37.30 C22.50 39.13 21.93 39.00 23.70 39.00 C25.47 39.00 24.87 39.77 26.40 37.30 C27.93 34.83 27.20 35.97 28.30 31.60 C29.40 27.23 29.00 26.07 29.70 24.20 C30.40 22.33 29.20 25.27 30.40 26.00 C31.60 26.73 31.13 26.90 33.30 26.40 C35.47 25.90 36.63 25.33 36.90 24.50 C37.17 23.67 35.80 24.47 34.10 23.90 C32.40 23.33 31.80 24.43 31.80 22.80 C31.80 21.17 32.57 22.33 34.10 19.00 C35.63 15.67 35.33 16.90 36.40 12.80 C37.47 8.70 37.57 10.13 37.30 6.70 C37.03 3.27 37.30 4.60 35.60 2.50 C33.90 0.40 34.87 1.13 32.20 0.40 C29.53 -0.33 29.90 0.17 27.60 0.30 C25.30 0.43 27.23 0.73 25.30 0.80 C23.37 0.87 24.23 0.53 21.80 0.50 C19.37 0.47 20.43 0.37 18.00 0.70 C15.57 1.03 16.53 1.43 14.50 1.50 C12.47 1.57 13.93 1.33 11.90 0.90 C9.87 0.47 10.83 0.37 8.40 0.20 C5.97 0.03 6.90 -0.87 4.60 0.40 Z"/><path fill="none" stroke="#1f4f6f" stroke-width="0.9" d="M14.50 1.50 C13.63 3.23 13.17 2.93 11.90 6.70 C10.63 10.47 11.23 8.97 10.70 12.80 C10.17 16.63 9.90 15.27 10.30 18.20 C10.70 21.13 10.37 19.83 11.90 21.60 C13.43 23.37 13.13 22.83 14.90 23.50 C16.67 24.17 16.43 23.57 17.20 23.60"/><path fill="none" stroke="#1f4f6f" stroke-width="0.9" d="M25.30 0.80 C26.43 1.87 26.80 1.67 28.70 4.00 C30.60 6.33 29.73 4.87 31.00 7.80 C32.27 10.73 32.10 9.33 32.50 12.80 C32.90 16.27 32.70 15.13 32.20 18.20 C31.70 21.27 31.40 20.73 31.00 22.00"/><path fill="none" stroke="#1f4f6f" stroke-width="0.9" d="M11.30 10.80 C12.50 10.33 12.67 9.23 14.90 9.40 C17.13 9.57 16.70 9.00 18.00 11.30 C19.30 13.60 19.20 12.27 18.80 16.30 C18.40 20.33 17.47 21.03 16.80 23.40"/><path fill="none" stroke="#1f4f6f" stroke-width="0.9" d="M31.60 10.10 C30.63 9.87 30.43 8.73 28.70 9.40 C26.97 10.07 26.90 9.80 26.40 12.10 C25.90 14.40 25.80 13.00 27.20 16.30 C28.60 19.60 29.47 20.10 30.60 22.00"/><circle cx="15.5" cy="12.6" r="0.8" fill="#1f4f6f"/><circle cx="29.3" cy="12.4" r="0.8" fill="#1f4f6f"/></svg><svg style="left:1932.2px;top:288.0px;" width="16.0" height="16.0" viewBox="0 0 16.0 16.0"><circle cx="8" cy="8" r="6" fill="#08fb08" stroke="#23302a" stroke-width="1.4"/></svg>
</aside>
<!-- services tool window -->
<section class="sec" id="services-tool-window">
<div style="left:0px;top:1049px;width:2801px;height:81px;background:#3c3f41;"></div>
<div style="left:0px;top:1048px;width:2801px;height:2px;background:#2f3133;"></div>
<div style="left:0px;top:1130px;width:2801px;height:2px;background:#2f3133;"></div>
<span class="t" style="left:-11.81px;top:1066.53px;font-size:36px;line-height:47px;color:#bbb;transform:scaleX(0.8051);transform-origin:0 0;">es</span>
<div style="left:2778px;top:1060px;width:2px;height:60px;background:#4f5254;"></div>
<div style="left:0px;top:1132px;width:2801px;height:82px;background:#3c3f41;"></div>
<div style="left:12px;top:1132px;width:2px;height:429px;background:#2f3133;"></div>
<div style="left:14px;top:1214px;width:2787px;height:4px;background:#2f3133;"></div>
<div style="left:244px;top:1212px;width:300px;height:6px;background:#747a80;"></div>
<span class="t" style="left:108.00px;top:1154.03px;font-size:36px;line-height:47px;color:#bbb;letter-spacing:0.786px;">Output</span>
<span class="t" style="left:338.10px;top:1154.03px;font-size:36px;line-height:47px;color:#bbb;transform:scaleX(0.9493);transform-origin:0 0;">Result 5</span>
<div style="left:14px;top:1218px;width:2787px;height:78px;background:#3c3f41;"></div>
<div style="left:0px;top:1222px;width:10px;height:339px;background:#595b5d;"></div>
<div style="left:14px;top:1296px;width:2787px;height:4px;background:#2f3133;"></div>
<span class="t" style="left:190.50px;top:1239.61px;font-size:30px;line-height:39px;color:#bbb;letter-spacing:-0.049px;">1 row</span>
<span class="t" style="left:2398.14px;top:1239.11px;font-size:30px;line-height:39px;color:#bbb;transform:scaleX(0.8570);transform-origin:0 0;">CSV</span>
<div style="left:484px;top:1228px;width:2px;height:60px;background:#545556;"></div>
<div style="left:740px;top:1228px;width:2px;height:60px;background:#545556;"></div>
<div style="left:2522px;top:1228px;width:2px;height:60px;background:#545556;"></div>
<div style="left:2778px;top:1228px;width:2px;height:60px;background:#4f5254;"></div>
<!-- result grid -->
<div style="left:14px;top:1300px;width:2787px;height:261px;background:#2b2b2b;"></div>
<div style="left:14px;top:1300px;width:2286px;height:75px;background:#3b3b3b;"></div>
<div style="left:14px;top:1300px;width:64px;height:75px;background:#3c3c3d;"></div>
<div style="left:78px;top:1300px;width:4px;height:122px;background:#353535;"></div>
<div style="left:14px;top:1376px;width:64px;height:46px;background:#3b3b3c;"></div>
<div style="left:82px;top:1376px;width:2216px;height:44px;background:#2a2a2a;"></div>
<div style="left:82px;top:1420px;width:2218px;height:2px;background:#353535;"></div>
<div style="left:14px;top:1374px;width:2286px;height:2px;background:#33383b;"></div>
<div style="left:397px;top:1300px;width:2px;height:122px;background:#353535;"></div>
<div style="left:774px;top:1300px;width:2px;height:122px;background:#353535;"></div>
<div style="left:1150px;top:1300px;width:2px;height:122px;background:#353535;"></div>
<div style="left:1450px;top:1300px;width:2px;height:122px;background:#353535;"></div>
<div style="left:2298px;top:1300px;width:2px;height:122px;background:#353535;"></div>
<span class="t m" style="left:215.00px;top:1319.29px;font-size:26.6px;line-height:35px;color:#a9b7c6;letter-spacing:0.323px;">"DB<span class="u">_</span>ID"</span>
<span class="t m" style="left:465.00px;top:1319.29px;font-size:26.6px;line-height:35px;color:#a9b7c6;letter-spacing:0.323px;">"TBL<span class="u">_</span>NAME"</span>
<span class="t m" style="left:840.50px;top:1319.29px;font-size:26.6px;line-height:35px;color:#a9b7c6;letter-spacing:0.323px;">"TBL<span class="u">_</span>TYPE"</span>
<span class="t m" style="left:1216.50px;top:1319.29px;font-size:26.6px;line-height:35px;color:#a9b7c6;letter-spacing:0.489px;">"NAME"</span>
<span class="t m" style="left:1516.50px;top:1319.29px;font-size:26.6px;line-height:35px;color:#a9b7c6;letter-spacing:0.177px;">"DB<span class="u">_</span>LOCATION<span class="u">_</span>URI"</span>
<span class="t m" style="left:36.88px;top:1380.79px;font-size:26.6px;line-height:35px;color:#a9b7c6;transform:scaleX(1.0417);transform-origin:0 0;">1</span>
<span class="t m" style="left:352.00px;top:1380.79px;font-size:26.6px;line-height:35px;color:#a9b7c6;letter-spacing:1.489px;">11</span>
<span class="t m" style="left:410.00px;top:1380.79px;font-size:26.6px;line-height:35px;color:#a9b7c6;letter-spacing:-0.261px;">text1</span>
<span class="t m" style="left:786.00px;top:1380.79px;font-size:26.6px;line-height:35px;color:#a9b7c6;letter-spacing:-0.011px;">MANAGED<span class="u">_</span>TABLE</span>
<span class="t m" style="left:1161.50px;top:1380.79px;font-size:26.6px;line-height:35px;color:#a9b7c6;letter-spacing:-0.011px;">text<span class="u">_</span>db</span>
<span class="t m" style="left:1461.00px;top:1380.79px;font-size:26.6px;line-height:35px;color:#a9b7c6;">hdfs://mycluster/hive/warehouse/text<span class="u">_</span>db.db</span>
<svg style="left:2707px;top:1069px;" width="42" height="42" viewBox="0 0 42 42"><circle cx="21" cy="21" r="18.4" fill="none" stroke="#afb1b3" stroke-width="5.2"/><path d="M21 2V15.2 M21 26.8V40 M2 21H15.2 M26.8 21H40" stroke="#afb1b3" stroke-width="5.8" fill="none"/></svg>
<svg style="left:0px;top:1238px;" width="7" height="12" viewBox="0 0 7 12"><path d="M-1 10.5 L6 2" stroke="#afb1b3" stroke-width="3.4" fill="none"/></svg>
<svg style="left:55.5px;top:1163px;" width="36.5" height="29.5" viewBox="0 0 36.5 29.5"><rect width="36.5" height="29.5" fill="#afb1b3"/><path d="M10 6.2 L21.6 13.4 L10 20.6" fill="none" stroke="#3c3f41" stroke-width="5.2"/></svg>
<svg style="left:59px;top:1181px;" width="22" height="22" viewBox="0 0 22 22"><circle cx="10.7" cy="10.4" r="10.3" fill="#f0a732"/><path d="M10.7 1 V15 M4 9.6 L10.7 16 L17.4 9.6" fill="none" stroke="#674718" stroke-width="2.8"/></svg>
<svg style="left:283px;top:1160px;" width="42" height="36" viewBox="0 0 42 36"><path fill="#9aa7b0" fill-rule="evenodd" d="M0 0H42V36H0Z M3 9V15H12V9Z M15 9V15H27V9Z M30 9V15H39V9Z M3 18V24H12V18Z M15 18V24H27V18Z M30 18V24H39V18Z M3 27V33H12V27Z M15 27V33H27V27Z M30 27V33H39V27Z"/></svg>
<svg style="left:484.3px;top:1164.8px;" width="23.9" height="22.9" viewBox="0 0 23.9 22.9"><path d="M1.1 1.1 L22.799999999999976 21.80000000000009 M22.799999999999976 1.1 L1.1 21.80000000000009" stroke="#666d71" stroke-width="3.2" fill="none"/></svg>
<svg style="left:38px;top:1241px;" width="32" height="34" viewBox="0 0 32 34"><path d="M4.7 2.4 V32 M28.3 4.3 L14.6 17 L28.3 29.7" fill="none" stroke="#5a5a5a" stroke-width="4.8"/></svg>
<svg style="left:119px;top:1241px;" width="23" height="34" viewBox="0 0 23 34"><path d="M18.6 4.3 L5.2 17 L18.6 29.7" fill="none" stroke="#5a5a5a" stroke-width="4.8"/></svg>
<svg style="left:280px;top:1252.5px;" width="26.5" height="17.5" viewBox="0 0 26.5 17.5"><path d="M3.6799999999999997 3.6799999999999997 L13.25 13.82 L22.82 3.6799999999999997" fill="none" stroke="#7f8b91" stroke-width="4.8"/></svg>
<svg style="left:345px;top:1241px;" width="23" height="34" viewBox="0 0 23 34"><path d="M4.6 4.3 L18 17 L4.6 29.7" fill="none" stroke="#5a5a5a" stroke-width="4.8"/></svg>
<svg style="left:416px;top:1241px;" width="32" height="34" viewBox="0 0 32 34"><path d="M27.8 2.4 V32 M4.5 4.3 L17.9 17 L4.5 29.7" fill="none" stroke="#5a5a5a" stroke-width="4.8"/></svg>
<svg style="left:516px;top:1239.5px;" width="36.5" height="36.5" viewBox="0 0 35.9 35.6" preserveAspectRatio="none"><path d="M5.36 10.5 A14.6 14.6 0 0 1 32.4 15.3" fill="none" stroke="#afb1b3" stroke-width="6.4"/><path d="M0 1.7 V15.4 H14 Z" fill="#afb1b3"/><path d="M30.64 25.1 A14.6 14.6 0 0 1 3.6 20.3" fill="none" stroke="#afb1b3" stroke-width="6.4"/><path d="M35.9 35 V20.5 H21.7 Z" fill="#afb1b3"/></svg>
<svg style="left:591px;top:1237px;" width="42" height="42" viewBox="0 0 42 42"><circle cx="20.9" cy="20.9" r="17.9" fill="none" stroke="#afb1b3" stroke-width="5.9"/><path d="M19.6 10.6 V22.4 L29.2 28.2" fill="none" stroke="#afb1b3" stroke-width="5"/></svg><svg style="left:618px;top:1272px;" width="22" height="14" viewBox="0 0 22 14"><path d="M2.4 3 H19.5 L11 11.5 Z" fill="#d3d3d3" stroke="#3c3f41" stroke-width="2.4" paint-order="stroke"/></svg>
<div style="left:675px;top:1243px;width:30px;height:30px;background:#5a5a5a;"></div>
<svg style="left:768px;top:1236.5px;" width="44" height="44.0" viewBox="0 0 44 44.0"><path fill="#afb1b3" d="M0.5 43.3 L17.6 23.2 L9.1 15 L21.1 12.9 L28.4 0.1 L43.3 15 L30.1 23.2 L30.1 34.8 L22.3 27.9 Z"/></svg>
<svg style="left:2465.5px;top:1253px;" width="27.5" height="17" viewBox="0 0 27.5 17"><path d="M3.6799999999999997 3.6799999999999997 L13.75 13.32 L23.82 3.6799999999999997" fill="none" stroke="#7f8b91" stroke-width="4.8"/></svg>
<svg style="left:2554px;top:1240px;" width="36" height="36" viewBox="0 0 36 36"><path fill="#afb1b3" d="M15 0 H21 V14 H29.5 L18 27 L6.5 14 H15Z M0 30 H36 V36 H0Z"/></svg>
<svg style="left:2632px;top:1240px;" width="36" height="36" viewBox="0 0 36 36"><path fill="#afb1b3" d="M0 0 H36 V6 H0Z M18 9 L29.5 22 H21 V36 H15 V22 H6.5Z"/></svg>
<svg style="left:2707px;top:1237px;" width="42" height="42" viewBox="0 0 42 42"><path fill="#3592c4" d="M17.5 12.5 L30 0 V9 H42 V16 H30 V25 Z"/><path fill="#3592c4" d="M24.5 29.5 L12 42 V33 H0 V26 H12 V17 Z"/></svg><svg style="left:2735px;top:1274px;" width="20" height="12" viewBox="0 0 20 12"><path d="M1.5 1 H18.5 L10 10 Z" fill="#d3d3d3"/></svg>
<svg style="left:163px;top:1318px;" width="42" height="36" viewBox="0 0 42 36"><rect x="0" y="0" width="15" height="36" fill="#8b979f"/><path fill="#9ba8b1" fill-rule="evenodd" d="M18 0H42V36H18Z M18 9V15H27V9Z M30 9V15H39V9Z M18 18V24H27V18Z M30 18V24H39V18Z M18 27V33H27V27Z M30 27V33H39V27Z"/></svg>
<svg style="left:413px;top:1318px;" width="42" height="36" viewBox="0 0 42 36"><rect x="0" y="0" width="15" height="36" fill="#8b979f"/><path fill="#9ba8b1" fill-rule="evenodd" d="M18 0H42V36H18Z M18 9V15H27V9Z M30 9V15H39V9Z M18 18V24H27V18Z M30 18V24H39V18Z M18 27V33H27V27Z M30 27V33H39V27Z"/></svg>
<svg style="left:789px;top:1318px;" width="42" height="36" viewBox="0 0 42 36"><rect x="0" y="0" width="15" height="36" fill="#8b979f"/><path fill="#9ba8b1" fill-rule="evenodd" d="M18 0H42V36H18Z M18 9V15H27V9Z M30 9V15H39V9Z M18 18V24H27V18Z M30 18V24H39V18Z M18 27V33H27V27Z M30 27V33H39V27Z"/></svg>
<svg style="left:1165px;top:1318px;" width="42" height="36" viewBox="0 0 42 36"><rect x="0" y="0" width="15" height="36" fill="#3d9cbb"/><path fill="#9ba8b1" fill-rule="evenodd" d="M18 0H42V36H18Z M18 9V15H27V9Z M30 9V15H39V9Z M18 18V24H27V18Z M30 18V24H39V18Z M18 27V33H27V27Z M30 27V33H39V27Z"/></svg>
<svg style="left:1465px;top:1318px;" width="42" height="36" viewBox="0 0 42 36"><rect x="0" y="0" width="15" height="36" fill="#8b979f"/><path fill="#9ba8b1" fill-rule="evenodd" d="M18 0H42V36H18Z M18 9V15H27V9Z M30 9V15H39V9Z M18 18V24H27V18Z M30 18V24H39V18Z M18 27V33H27V27Z M30 27V33H39V27Z"/></svg>
<svg style="left:357px;top:1323.5px;" width="15" height="24.0" viewBox="0 0 15 24.0"><path fill="#a3a3a3" d="M7.5 0 L15 9 H0 Z M0 15 H15 L7.5 24 Z"/></svg>
<svg style="left:732.5px;top:1323.5px;" width="15.0" height="24.0" viewBox="0 0 15.0 24.0"><path fill="#a3a3a3" d="M7.5 0 L15 9 H0 Z M0 15 H15 L7.5 24 Z"/></svg>
<svg style="left:1109px;top:1323.5px;" width="15" height="24.0" viewBox="0 0 15 24.0"><path fill="#a3a3a3" d="M7.5 0 L15 9 H0 Z M0 15 H15 L7.5 24 Z"/></svg>
<svg style="left:1409px;top:1323.5px;" width="15" height="24.0" viewBox="0 0 15 24.0"><path fill="#a3a3a3" d="M7.5 0 L15 9 H0 Z M0 15 H15 L7.5 24 Z"/></svg>
<svg style="left:2256.5px;top:1323.5px;" width="15.0" height="24.0" viewBox="0 0 15.0 24.0"><path fill="#a3a3a3" d="M7.5 0 L15 9 H0 Z M0 15 H15 L7.5 24 Z"/></svg>
</section>
</body></html>
